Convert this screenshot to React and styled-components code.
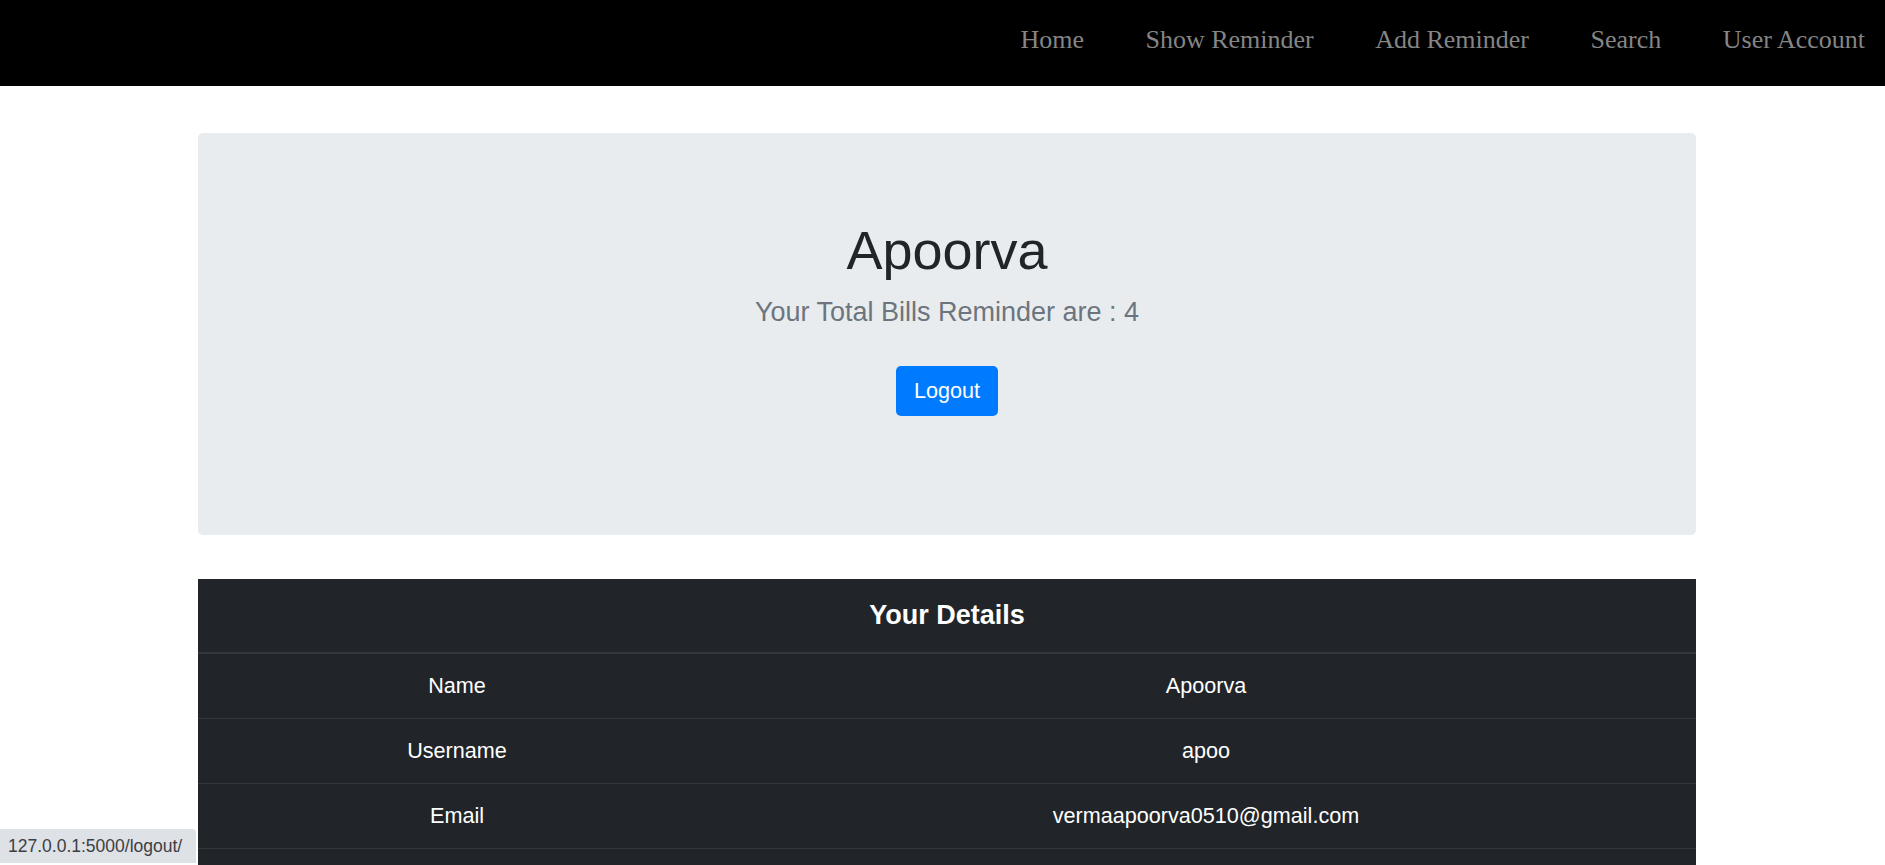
import React from "react";
import styled, { createGlobalStyle } from "styled-components";

const GlobalStyle = createGlobalStyle`
  * {
    box-sizing: border-box;
  }
  body {
    margin: 0;
    background: #fff;
    font-family: "Liberation Sans", Arial, sans-serif;
    color: #212529;
  }
`;

const links = ["Home", "Show Reminder", "Add Reminder", "Search", "User Account"];

const details = [
  { label: "Name", value: "Apoorva" },
  { label: "Username", value: "apoo" },
  { label: "Email", value: "vermaapoorva0510@gmail.com" },
  { label: "Total Reminders", value: "4" },
];

const App = () => {
  return (
    <>
      <GlobalStyle />
      <Nav>
        <NavList>
          {links.map((link) => {
            return (
              <NavItem key={link}>
                <NavLink href="#">{link}</NavLink>
              </NavItem>
            );
          })}
        </NavList>
      </Nav>
      <Container>
        <Jumbotron>
          <Title>Apoorva</Title>
          <Lead>Your Total Bills Reminder are : 4</Lead>
          <LogoutButton href="#">Logout</LogoutButton>
        </Jumbotron>
        <DetailsTable>
          <thead>
            <tr>
              <HeadCell colSpan={2}>Your Details</HeadCell>
            </tr>
          </thead>
          <tbody>
            {details.map((row) => {
              const { label, value } = row;
              return (
                <tr key={label}>
                  <Cell first>{label}</Cell>
                  <Cell>{value}</Cell>
                </tr>
              );
            })}
          </tbody>
        </DetailsTable>
      </Container>
      <StatusBubble>127.0.0.1:5000/logout/</StatusBubble>
    </>
  );
};

const Nav = styled.nav`
  height: 86px;
  background: #000;
  padding: 25px 20px 0 0;
`;

const NavList = styled.ul`
  list-style: none;
  margin: 0;
  padding: 0;
  display: flex;
  justify-content: flex-end;
  gap: 61.5px;
`;

const NavItem = styled.li`
  font-family: "Liberation Serif", "Times New Roman", serif;
  font-size: 26px;
`;

const NavLink = styled.a`
  color: #858585;
  text-decoration: none;
`;

const Container = styled.main`
  width: 1498px;
  margin: 47px 0 0 198px;
`;

const Jumbotron = styled.section`
  background: #e9ecef;
  border-radius: 5px;
  padding: 85px 32px 119px;
  margin-bottom: 44px;
  text-align: center;
`;

const Title = styled.h1`
  margin: 0 0 10px;
  font-size: 54px;
  font-weight: 400;
  line-height: 1.2;
  color: #212529;
`;

const Lead = styled.p`
  margin: 0 0 34px;
  font-size: 27px;
  line-height: 39.6px;
  color: #6c757d;
`;

const LogoutButton = styled.a`
  display: inline-block;
  height: 50px;
  padding: 0 18px;
  line-height: 50px;
  font-size: 21.6px;
  color: #fff;
  background: #007bff;
  border-radius: 5px;
  text-decoration: none;
`;

const DetailsTable = styled.table`
  width: 100%;
  border-collapse: collapse;
  background: #212529;
  color: #fff;
  text-align: center;
`;

const HeadCell = styled.th`
  padding: 16px;
  font-size: 27px;
  font-weight: 700;
  line-height: 41px;
  border-bottom: 2px solid #32383e;
`;

const Cell = styled.td`
  width: ${(props) => (props.first ? "518px" : "auto")};
  padding: 16px;
  font-size: 21.6px;
  line-height: 32px;
  border-top: 1px solid #32383e;
`;

const StatusBubble = styled.div`
  position: fixed;
  left: 0;
  bottom: 2px;
  height: 34px;
  padding: 0 14px 0 8px;
  line-height: 34px;
  font-size: 17.5px;
  color: #3c4043;
  background: #dee1e6;
  border-top-right-radius: 4px;
`;

export default App;
